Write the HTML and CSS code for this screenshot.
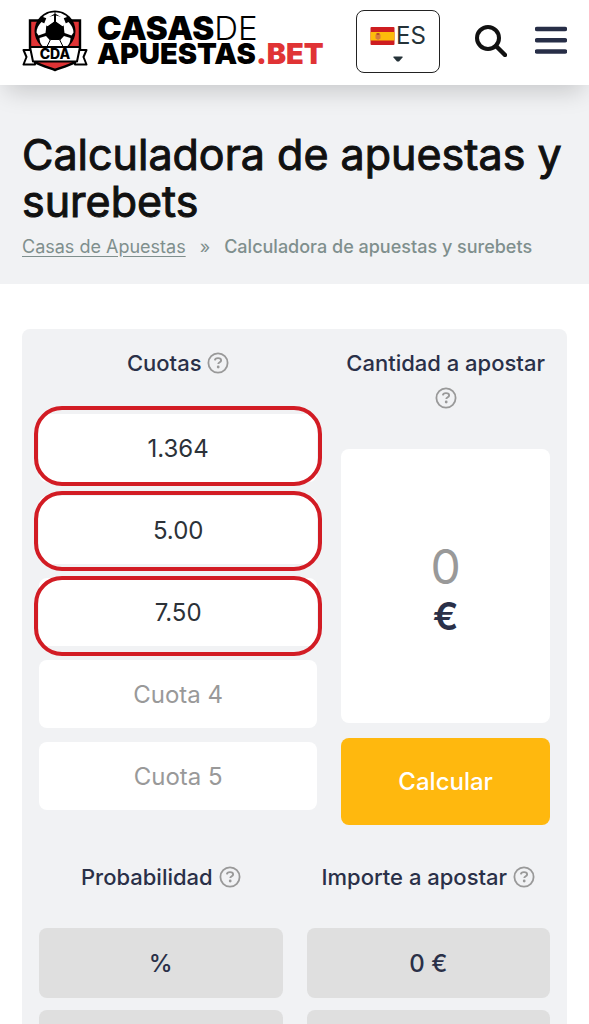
FILE: index.html
```html
<!DOCTYPE html>
<html lang="es">
<head>
<meta charset="utf-8">
<meta name="viewport" content="width=device-width, initial-scale=1">
<title>Calculadora de apuestas y surebets</title>
<link rel="stylesheet" href="styles.css">
</head>
<body>
<svg class="sprite" aria-hidden="true">
  <symbol id="help" viewBox="0 0 22 22">
    <circle cx="11" cy="11" r="9.6" fill="none" stroke="currentColor" stroke-width="1.8"/>
    <path d="M7.900 8.400C8 6.900 9.200 6.100 11 6.100c1.900 0 3.100.900 3.100 2.300 0 1.900-2.800 1.800-2.800 3.700" fill="none" stroke="currentColor" stroke-width="1.900"/>
    <circle cx="11.200" cy="15" r="1.400" fill="currentColor"/>
  </symbol>
</svg>
<header class="header">
  <a class="logo" href="#" aria-label="Casas de Apuestas .bet">
    <svg class="crest" viewBox="0 0 66 62" aria-hidden="true">
      <path d="M8 10.500h50V47c0 5-14 9-25 13C22 56 8 52 8 47z" fill="#e03335" stroke="#000" stroke-width="2.400"/>
      <circle cx="33" cy="21" r="20.500" fill="#000"/>
      <g fill="#fff">
        <path d="M22.500 5.500q4.500-3.200 10-3.200v1.500L25 8.500l-4-1.500z"/>
        <path d="M43.500 5.500q-4.500-3.200-10-3.200v1.500L41 8.500l4-1.500z"/>
        <path d="M19.500 12l5 2.500-1 8.500-7 2.500-2-3q.3-6 5-10.500z"/>
        <path d="M46.500 12l-5 2.500 1 8.500 7 2.500 2-3q-.3-6-5-10.500z"/>
        <path d="M17.500 28l6.500-2 5 5.500-2.500 5H21q-3.500-3.500-3.500-8.500z"/>
        <path d="M48.500 28l-6.500-2-5 5.500 2.500 5H45q3.500-3.500 3.500-8.500z"/>
        <path d="M24.500 7.500l7.500-2v6.500l-6 4.500-4-2.500z"/>
        <path d="M41.500 7.500l-7.500-2v6.500l6 4.500 4-2.500z"/>
      </g>
      <path d="M33 11l8.500 6-3.300 10H27.800l-3.300-10z" fill="#000"/>
      <path d="M28.500 29.500h9l3.500 7H25z" fill="#fff" stroke="#000"/>
      <path d="M8.500 40H1.500l3 7-3 7.500H13V49zM57.500 40h7l-3 7 3 7.500H53V49z" fill="#fff" stroke="#000" stroke-width="2" stroke-linejoin="round"/>
      <path d="M8 37h50l-3 14.500H11z" fill="#fff" stroke="#000" stroke-width="2" stroke-linejoin="round"/>
      <text class="crest-text" x="33" y="49" text-anchor="middle">CDA</text>
    </svg>
    <span class="wordmark">
      <span class="word-top">CASAS<span class="thin">DE</span></span>
      <span class="word-bottom">APUESTAS<span class="red">.BET</span></span>
    </span>
  </a>
  <button class="lang" type="button" aria-label="Idioma: ES">
    <span class="lang-row">
      <svg class="flag" viewBox="0 0 24 18" aria-hidden="true">
        <rect width="24" height="18" rx="1" fill="#ce1d20"/>
        <rect y="5" width="24" height="8.500" fill="#fdbb0b"/>
        <path d="M5 7.500h5v4l-2.500 1.500L5 11.500z" fill="#d87a3c"/>
        <path d="M6 6h3v2H6z" fill="#b84b2a"/>
      </svg>
      <span>ES</span>
    </span>
    <svg class="caret" viewBox="0 0 10 6" aria-hidden="true"><path d="M.5.500h9v1L6 5.500H4L.5 1.500z" fill="#253238"/></svg>
  </button>
  <button class="icon-button" type="button" aria-label="Buscar">
    <svg class="icon" viewBox="0 0 32 32" aria-hidden="true"><circle cx="13" cy="13" r="11" fill="none" stroke="#111" stroke-width="4"/><path d="M21 21l9 9" stroke="#111" stroke-width="4.400" stroke-linecap="round"/></svg>
  </button>
  <button class="icon-button" type="button" aria-label="Menú">
    <svg class="icon" viewBox="0 0 32 32" aria-hidden="true"><path d="M2 4h28M2 15.300h28M2 26.500h28" stroke="#272e47" stroke-width="4.400" stroke-linecap="round"/></svg>
  </button>
</header>
<section class="hero">
  <h1 class="title">Calculadora de apuestas y surebets</h1>
  <nav class="crumbs" aria-label="Ruta">
    <a href="#">Casas de Apuestas</a><span>»</span><strong>Calculadora de apuestas y surebets</strong>
  </nav>
</section>
<main class="main">
  <form class="panel">
    <div class="entry">
      <div class="odds">
        <h2 class="label">Cuotas <button class="help" type="button" aria-label="Ayuda sobre cuotas"><svg><use href="#help"/></svg></button></h2>
        <div class="fields">
          <input class="field" type="text" aria-label="Cuota 1" placeholder="Cuota 1" value="1.364">
          <input class="field" type="text" aria-label="Cuota 2" placeholder="Cuota 2" value="5.00">
          <input class="field" type="text" aria-label="Cuota 3" placeholder="Cuota 3" value="7.50">
          <input class="field" type="text" aria-label="Cuota 4" placeholder="Cuota 4">
          <input class="field" type="text" aria-label="Cuota 5" placeholder="Cuota 5">
          <div class="rings" aria-hidden="true"><span class="ring"></span><span class="ring"></span><span class="ring"></span></div>
        </div>
      </div>
      <div class="stake">
        <h2 class="label">Cantidad a apostar <button class="help" type="button" aria-label="Ayuda sobre cantidad"><svg><use href="#help"/></svg></button></h2>
        <label class="amount">
          <input class="amount-input" type="text" aria-label="Cantidad a apostar" placeholder="0">
          <span class="currency">€</span>
        </label>
        <button class="submit" type="submit">Calcular</button>
      </div>
    </div>
    <div class="results">
      <h2 class="label">Probabilidad <button class="help" type="button" aria-label="Ayuda sobre probabilidad"><svg><use href="#help"/></svg></button></h2>
      <h2 class="label">Importe a apostar <button class="help" type="button" aria-label="Ayuda sobre importe"><svg><use href="#help"/></svg></button></h2>
      <output class="result">%</output>
      <output class="result">0 €</output>
      <output class="result"></output>
      <output class="result"></output>
    </div>
  </form>
</main>
</body>
</html>
```
FILE: styles.css
```css
* { box-sizing: border-box; }
body {
  margin: 0;
  background: #fff;
  color: #111;
  font-family: Inter, "Liberation Sans", sans-serif;
}
button, input { font: inherit; color: inherit; }
button { padding: 0; border: 0; background: none; cursor: pointer; }
svg { display: block; }
.sprite { position: absolute; width: 0; height: 0; }

.header {
  position: relative;
  display: flex;
  align-items: center;
  height: 85px;
  padding: 0 22px 3px;
  background: #fff;
  box-shadow: 0 12px 24px -6px rgba(0, 0, 0, .18);
}
.logo {
  display: flex;
  align-items: center;
  gap: 9px;
  margin-right: auto;
  color: #000;
  text-decoration: none;
}
.crest { width: 66px; height: 62px; }
.crest-text { font-size: 14px; font-weight: 800; }
.wordmark { display: flex; flex-direction: column; }
.word-top { font-size: 33px; line-height: 26px; font-weight: 900; }
.word-bottom { font-size: 29px; line-height: 26px; font-weight: 900; }
.thin { font-weight: 300; }
.red { color: #e03335; }
.lang {
  display: flex;
  flex-direction: column;
  align-items: center;
  justify-content: center;
  gap: 5px;
  width: 84px;
  height: 63px;
  border: 1px solid #222;
  border-radius: 8px;
  color: #253238;
}
.lang-row { display: flex; align-items: center; gap: 1px; font-size: 24px; line-height: 30px; }
.flag { width: 25px; height: 18px; }
.caret { width: 10px; height: 6px; }
.icon-button { margin-left: 28px; }
.lang + .icon-button { margin-left: 35px; }
.icon { width: 32px; height: 32px; }

.hero { padding: 46px 22px 25px; background: #f1f2f4; }
.title {
  margin: 0;
  font-size: 43px;
  line-height: 47px;
  font-weight: 400;
  -webkit-text-stroke: 1px currentColor;
}
.crumbs {
  display: flex;
  gap: 14px;
  margin-top: 10px;
  font-size: 18px;
  line-height: 24px;
  color: #7f8f8d;
}
.crumbs a { color: inherit; text-underline-offset: 3px; }
.crumbs strong { font-weight: 500; }

.main { padding: 45px 22px; }
.panel { padding: 17px; border-radius: 8px; background: #f1f2f4; color: #2a3048; }
.entry { display: grid; grid-template-columns: 4fr 3fr; gap: 24px; }
.label {
  margin: 0;
  font-size: 22px;
  line-height: 35px;
  font-weight: 500;
  text-align: center;
}
.help { width: 22px; height: 22px; color: #999; vertical-align: -3px; }
.help svg { width: 22px; height: 22px; }
.fields { position: relative; display: grid; gap: 14px; margin-top: 33px; }
.field {
  width: 100%;
  height: 68px;
  border: 0;
  border-radius: 8px;
  background: #fff;
  color: #2c3238;
  font-size: 24px;
  text-align: center;
}
.field::placeholder, .amount-input::placeholder { color: #999; opacity: 1; }
.rings {
  position: absolute;
  inset: -8px -5px auto -5px;
  display: grid;
  gap: 5px;
  pointer-events: none;
}
.ring { height: 80px; border: 4px solid #d21c24; border-radius: 28px; }
.stake { display: flex; flex-direction: column; }
.amount {
  display: flex;
  flex-direction: column;
  align-items: center;
  justify-content: center;
  height: 274px;
  margin: 33px 0 15px;
  padding-top: 2px;
  border-radius: 8px;
  background: #fff;
}
.amount-input {
  width: 100%;
  height: 58px;
  padding: 0;
  border: 0;
  background: none;
  font-size: 48px;
  text-align: center;
}
.currency { font-size: 38px; line-height: 42px; font-weight: 600; }
.submit {
  height: 87px;
  border-radius: 8px;
  background: #ffb80e;
  color: #fff;
  font-size: 24px;
  font-weight: 500;
}
.results {
  display: grid;
  grid-template-columns: 1fr 1fr;
  gap: 12px 24px;
  margin-top: 35px;
}
.results .label { margin-bottom: 21px; }
.result {
  display: grid;
  place-items: center;
  height: 70px;
  border-radius: 8px;
  background: #dfdfdf;
  font-size: 24px;
  font-weight: 500;
}
```
